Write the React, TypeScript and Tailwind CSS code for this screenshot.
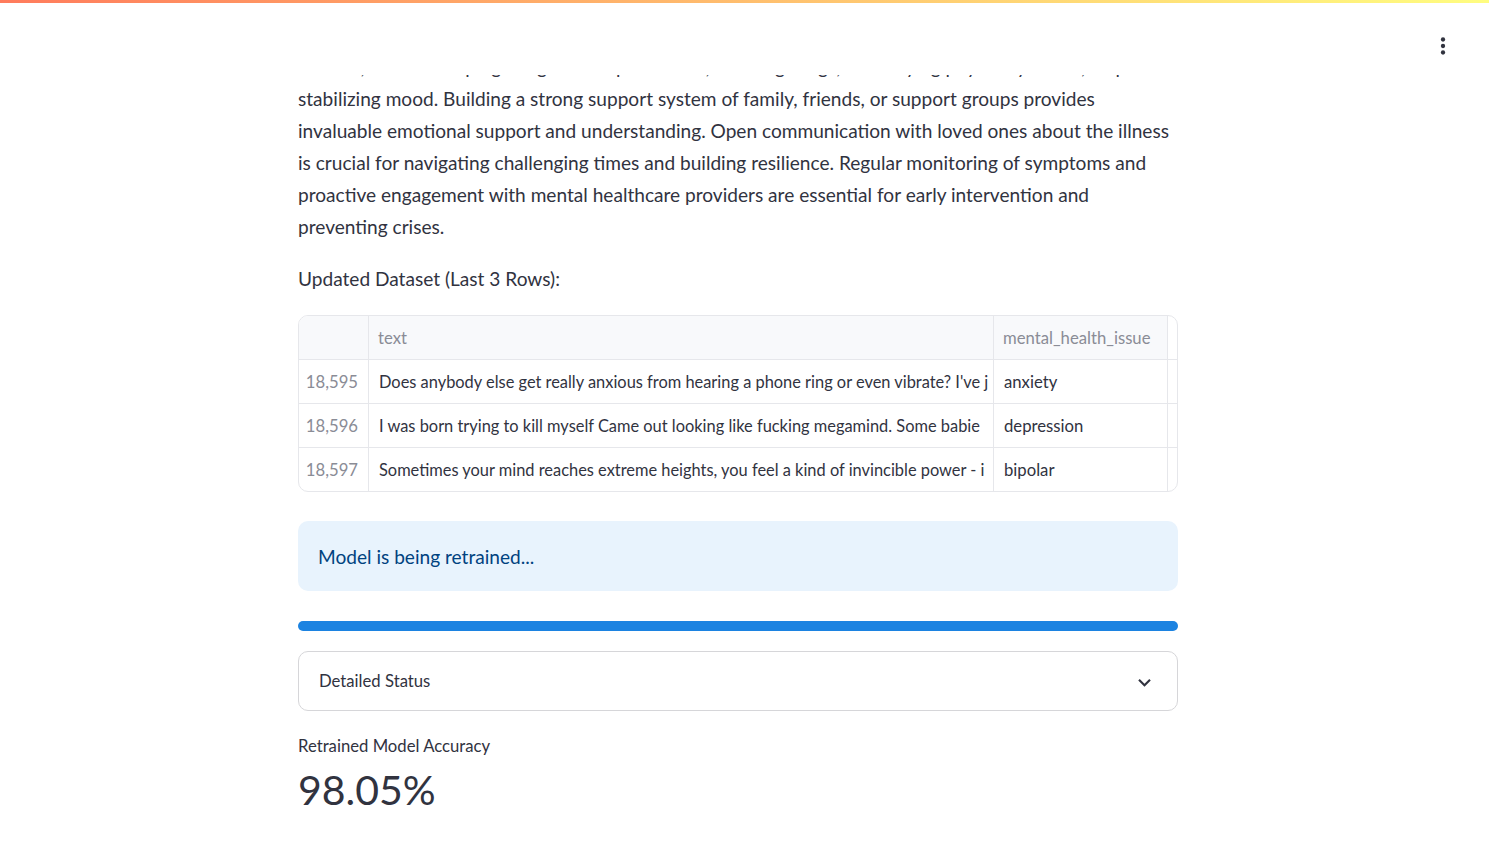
import React from "react";

const paragraph = [
  "choices, such as keeping a regular sleep schedule, avoiding drugs, and staying physically active, help in",
  "stabilizing mood. Building a strong support system of family, friends, or support groups provides",
  "invaluable emotional support and understanding. Open communication with loved ones about the illness",
  "is crucial for navigating challenging times and building resilience. Regular monitoring of symptoms and",
  "proactive engagement with mental healthcare providers are essential for early intervention and",
  "preventing crises.",
];

// cells show only what fits in the column, like the grid in the screenshot
const rows = [
  {
    idx: "18,595",
    text: "Does anybody else get really anxious from hearing a phone ring or even vibrate? I've j",
    issue: "anxiety",
  },
  {
    idx: "18,596",
    text: "I was born trying to kill myself Came out looking like fucking megamind. Some babie",
    issue: "depression",
  },
  {
    idx: "18,597",
    text: "Sometimes your mind reaches extreme heights, you feel a kind of invincible power - i",
    issue: "bipolar",
  },
];

const Header = () => (
  <header className="fixed inset-x-0 top-0 z-10 h-[75px] bg-white">
    <div className="h-[3px] bg-linear-to-r from-[#ff7b5c] to-[#fffd80]" />
    <button className="absolute right-[33px] top-[33px]">
      <svg width="26" height="26" viewBox="0 0 24 24" fill="#31333f">
        <circle cx="12" cy="6" r="2" />
        <circle cx="12" cy="12" r="2" />
        <circle cx="12" cy="18" r="2" />
      </svg>
    </button>
  </header>
);

const DataTable = () => (
  <div className="mt-[20px] overflow-hidden rounded-[10px] border border-[#e6e7eb] text-[16.7px]">
    <div className="grid h-[44px] grid-cols-[70px_625px_174px_1fr] border-b border-[#e6e7eb]">
      <div className="border-r border-[#e6e7eb] bg-[#f8f9fb]" />
      <div className="flex items-center border-r border-[#e6e7eb] bg-[#f8f9fb] px-[9px] pt-[2px] text-[#8a8c96]">
        text
      </div>
      <div className="flex items-center border-r border-[#e6e7eb] bg-[#f8f9fb] px-[9px] pt-[2px] text-[#8a8c96]">
        mental_health_issue
      </div>
      <div />
    </div>
    {rows.map((r, i) => (
      <div
        key={r.idx}
        className={
          i < rows.length - 1
            ? "grid h-[44px] grid-cols-[70px_625px_174px_1fr] border-b border-[#e6e7eb]"
            : "grid h-[43px] grid-cols-[70px_625px_174px_1fr]"
        }
      >
        <div className="flex items-center justify-end border-r border-[#e6e7eb] px-[10px] pt-[2px] text-[#8a8c96]">
          {r.idx}
        </div>
        <div className="flex items-center overflow-hidden whitespace-nowrap border-r border-[#e6e7eb] pl-[10px] pt-[2px] text-[16.4px]">
          {r.text}
        </div>
        <div className="flex items-center overflow-hidden whitespace-nowrap border-r border-[#e6e7eb] pl-[10px] pt-[2px]">
          {r.issue}
        </div>
        <div />
      </div>
    ))}
  </div>
);

export default function App() {
  return (
    <div className="min-h-screen bg-white font-['Lato',sans-serif] text-[#31333f]">
      <Header />
      <div className="pr-[13px]">
        <main className="mx-auto w-[880px] pt-[51px] pb-[40px]">
          <p className="text-[19.1px] leading-[32px]">
            {paragraph.map((line) => (
              <span key={line} className="block whitespace-nowrap">
                {line}
              </span>
            ))}
          </p>
          <p className="mt-[20px] text-[19.1px] leading-[32px]">Updated Dataset (Last 3 Rows):</p>

          <DataTable />

          <div className="mt-[29px] rounded-[10px] bg-[#e8f3fd] px-[20px] pt-[20px] pb-[18px] text-[19.1px] leading-[32px] text-[#004280]">
            Model is being retrained...
          </div>

          <div className="mt-[30px] h-[10px] rounded-full bg-[#1c83e1]" />

          <div className="mt-[20px] flex h-[60px] items-center justify-between rounded-[10px] border border-[#d6d6d9] pl-[20px] pr-[20px] pt-[2px] text-[16.7px]">
            <span>Detailed Status</span>
            <svg width="25" height="25" viewBox="0 0 24 24" fill="#31333f">
              <path d="M16.59 8.59L12 13.17 7.41 8.59 6 10l6 6 6-6z" />
            </svg>
          </div>

          <div className="mt-[21px] text-[16.7px] leading-[28px]">Retrained Model Accuracy</div>
          <div className="text-[41px] leading-[60px]">98.05%</div>
        </main>
      </div>
    </div>
  );
}
